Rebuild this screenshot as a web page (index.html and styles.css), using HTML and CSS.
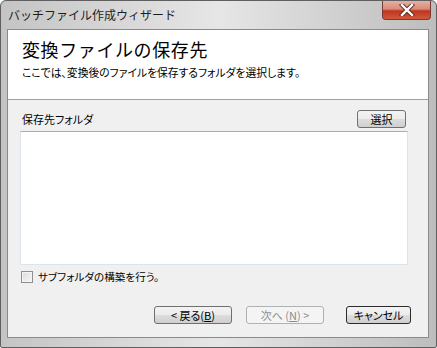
FILE: index.html
```html
<!DOCTYPE html>
<html lang="ja">
    <head>
        <meta charset="UTF-8" />
        <title>バッチファイル作成ウィザード</title>
        <link rel="stylesheet" href="styles.css">
    </head>
    <body>
        <div class="window">
            <div class="titlebar">
                <span class="titleText">バッチファイル作成ウィザード</span>
                <div class="closeBtn">
                    <svg width="16" height="12" viewBox="0 0 16 12">
                        <path d="M3 1 L13 11 M13 1 L3 11" stroke="#5a2a24" stroke-width="4.2" stroke-linecap="square" fill="none"/>
                        <path d="M3 1 L13 11 M13 1 L3 11" stroke="#ffffff" stroke-width="2.4" stroke-linecap="square" fill="none"/>
                    </svg>
                </div>
            </div>
            <div class="client">
                <div class="header">
                    <h1>変換ファイルの保存先</h1>
                    <p class="subtitle">ここでは、変換後のファイルを保存するフォルダを選択します。</p>
                </div>
                <div class="content">
                    <div class="folderRow">
                        <span class="label">保存先フォルダ</span>
                        <button class="btn selectBtn">選択</button>
                    </div>
                    <div class="listBox"></div>
                    <label class="checkRow">
                        <span class="checkBox"></span>
                        <span class="label">サブフォルダの構築を行う。</span>
                    </label>
                    <div class="footer">
                        <button class="btn navBtn">&lt; 戻る(<u>B</u>)</button>
                        <button class="btn navBtn disabled">次へ (<u>N</u>) &gt;</button>
                        <button class="btn cancelBtn">キャンセル</button>
                    </div>
                </div>
            </div>
        </div>
    </body>
</html>
```

FILE: styles.css
```css
body {
    margin: 0;
    background-color: #ffffff;
    font-family: "Noto Sans CJK JP", sans-serif;
}
.window {
    box-sizing: border-box;
    width: 437px;
    height: 348px;
    border: 1px solid #5f5f5f;
    border-radius: 6px 6px 2px 2px;
    padding: 0 7px 9px 6px;
    display: flex;
    flex-direction: column;
    background: linear-gradient(90deg, #c4c4c4 0%, #d9d9d9 30%, #e6e6e6 50%, #d2d2d2 75%, #bdbdbd 100%);
}
.titlebar {
    height: 28px;
    display: flex;
    align-items: flex-start;
    justify-content: space-between;
}
.titleText {
    margin-top: 6px;
    margin-left: 1px;
    font-size: 12px;
    line-height: 16px;
    color: #1e1e1e;
}
.closeBtn {
    width: 47px;
    height: 18px;
    margin-right: -2px;
    border: 1px solid #7a3a33;
    border-top: none;
    border-radius: 0 0 4px 4px;
    background: linear-gradient(#e6b0a4 0%, #d88a78 45%, #c0341e 55%, #cf5a3a 100%);
    display: flex;
    align-items: center;
    justify-content: center;
}
.client {
    flex: 1;
    display: flex;
    flex-direction: column;
    border: 1px solid #8a8a8a;
    background-color: #f0f0f0;
}
.header {
    height: 70px;
    box-sizing: border-box;
    background-color: #ffffff;
    border-bottom: 1px solid #a0a0a0;
    padding: 7px 0 0 14px;
}
h1 {
    margin: 0;
    font-size: 18px;
    font-weight: normal;
    line-height: 24px;
    letter-spacing: 0.6px;
    color: #000000;
}
.subtitle {
    margin: 4px 0 0 0;
    font-size: 10.8px;
    line-height: 14px;
    color: #000000;
    font-feature-settings: "palt";
}
.content {
    flex: 1;
    display: flex;
    flex-direction: column;
}
.folderRow {
    margin-top: 10px;
    padding: 0 22px 0 14px;
    display: flex;
    align-items: center;
    justify-content: space-between;
}
.label {
    font-size: 11px;
    line-height: 14px;
    color: #000000;
    font-feature-settings: "palt";
}
.btn {
    box-sizing: border-box;
    height: 18px;
    padding: 0;
    border: 1px solid #707070;
    border-radius: 3px;
    background: linear-gradient(#f3f3f3 0%, #ebebeb 50%, #dddddd 51%, #cfcfcf 100%);
    font-family: "Noto Sans CJK JP", sans-serif;
    font-size: 11px;
    line-height: 14px;
    color: #000000;
    font-feature-settings: "palt";
}
.selectBtn {
    width: 49px;
}
.listBox {
    height: 134px;
    box-sizing: border-box;
    margin: 3px 20px 0 12px;
    background-color: #ffffff;
    border: 1px solid #dbe3ec;
    border-top-color: #abadb3;
}
.checkRow {
    margin-top: 5px;
    padding-left: 13px;
    display: flex;
    align-items: center;
    gap: 5px;
}
.checkBox {
    width: 12px;
    height: 12px;
    box-sizing: border-box;
    border: 1px solid #8f8f8f;
    background: linear-gradient(135deg, #dcdcdc 0%, #f6f6f6 100%);
    box-shadow: inset 0 0 0 1px #f4f4f4;
}
.checkRow .label {
    font-size: 10.6px;
}
.footer {
    margin-top: auto;
    padding: 0 17px 13px 0;
    display: flex;
    justify-content: flex-end;
}
.navBtn {
    width: 78px;
    margin-right: 14px;
}
.navBtn.disabled {
    margin-right: 22px;
    border-color: #adb2b5;
    background: #f4f4f4;
    color: #8d8d8d;
}
.cancelBtn {
    width: 65px;
    border-color: #2b2b2b;
}
```
